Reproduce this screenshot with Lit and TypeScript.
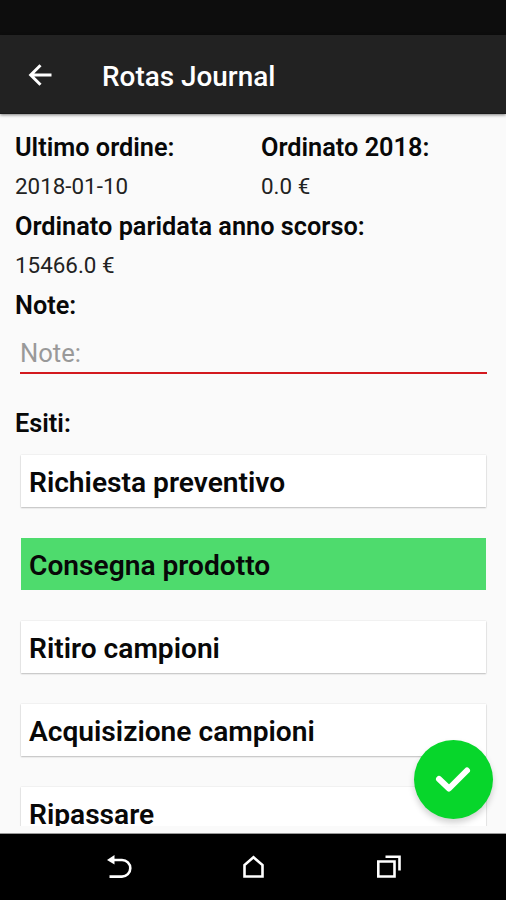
import { LitElement, html, css } from "lit";
import { customElement, property, state } from "lit/decorators.js";
import { classMap } from "lit/directives/class-map.js";

@customElement("outcome-item")
class OutcomeItem extends LitElement {
  @property() label = "";
  @property({ type: Boolean }) selected = false;

  static styles = css`
    :host {
      display: block;
    }
    .card {
      box-sizing: border-box;
      height: 52px;
      padding-left: 8px;
      line-height: 56px;
      font-size: 28.15px;
      font-weight: 600;
      background: #fff;
      color: #080808;
      white-space: nowrap;
      box-shadow: 0 1px 1.5px rgba(0, 0, 0, 0.22), 0 0 1.5px rgba(0, 0, 0, 0.12);
    }
    .card.selected {
      background: #4edb6d;
      box-shadow: none;
    }
  `;

  render() {
    return html`<div class=${classMap({ card: true, selected: this.selected })}>${this.label}</div>`;
  }
}

@customElement("app-root")
class AppRoot extends LitElement {
  @state() private chosen = "Consegna prodotto";

  private outcomes = [
    "Richiesta preventivo",
    "Consegna prodotto",
    "Ritiro campioni",
    "Acquisizione campioni",
    "Ripassare",
  ];

  static styles = css`
    :host {
      display: flex;
      flex-direction: column;
      position: relative;
      height: 900px;
      overflow: hidden;
      background: #fafafa;
      color: #080808;
      font-family: Roboto, sans-serif;
    }
    .status {
      flex: none;
      height: 35px;
      background: #0d0d0d;
    }
    .bar {
      flex: none;
      display: flex;
      align-items: center;
      height: 79px;
      box-sizing: border-box;
      padding: 2px 0 0 28px;
      background: #222;
      border-bottom: 1px solid #1a1a1a;
      box-shadow: 0 1px 3px rgba(0, 0, 0, 0.5);
      z-index: 1;
    }
    .back {
      width: 24px;
      height: 24px;
      flex: none;
      display: block;
    }
    .title {
      margin: 2px 0 0 50px;
      font-size: 27.9px;
      font-weight: 500;
      color: #fff;
      white-space: nowrap;
    }
    .content {
      flex: 1;
      min-height: 0;
      overflow: hidden;
      padding: 14px 15px 0;
      margin-bottom: 8px;
    }
    .pair {
      display: grid;
      grid-template-columns: 246px 1fr;
    }
    .label,
    .value {
      height: 39.4px;
      line-height: 39.4px;
      white-space: nowrap;
    }
    .label {
      font-size: 25.3px;
      font-weight: 600;
    }
    .value {
      font-size: 22.4px;
      font-weight: 400;
      color: #222;
    }
    .field {
      display: flex;
      align-items: center;
      box-sizing: border-box;
      height: 49px;
      margin: 0 4px 0 5px;
      padding-top: 10px;
      border-bottom: 2px solid #d3191e;
      font-size: 25.6px;
      color: #999;
    }
    .outcomes {
      margin-top: 30px;
      line-height: 40.4px;
    }
    .list {
      display: flex;
      flex-direction: column;
      gap: 31px;
      margin: 12px 5px 0 6px;
    }
    .fab {
      position: absolute;
      left: 414px;
      top: 740px;
      width: 79px;
      height: 79px;
      border-radius: 50%;
      background: #07d62b;
      box-shadow: 0 4px 6px rgba(0, 0, 0, 0.18);
    }
    .fab svg {
      display: block;
      width: 79px;
      height: 79px;
    }
    .nav {
      flex: none;
      box-sizing: border-box;
      height: 66px;
      background: #000;
      box-shadow: 0 -1px 0 #999;
    }
    .nav svg {
      display: block;
      width: 506px;
      height: 66px;
    }
  `;

  render() {
    return html`
      <div class="status"></div>
      <header class="bar">
        <svg class="back" viewBox="0 0 24 24" fill="none" stroke="#fff" stroke-width="3">
          <path d="M23.5 12H3M12.5 2.2L2.7 12L12.5 21.8" />
        </svg>
        <div class="title">Rotas Journal</div>
      </header>
      <main class="content">
        <div class="pair">
          <div class="label">Ultimo ordine:</div>
          <div class="label">Ordinato 2018:</div>
          <div class="value">2018-01-10</div>
          <div class="value">0.0 €</div>
        </div>
        <div class="label">Ordinato paridata anno scorso:</div>
        <div class="value">15466.0 €</div>
        <div class="label">Note:</div>
        <div class="field">Note:</div>
        <div class="label outcomes">Esiti:</div>
        <div class="list">
          ${this.outcomes.map(
            (o) => html`<outcome-item
              .label=${o}
              .selected=${o === this.chosen}
              @click=${() => (this.chosen = o)}
            ></outcome-item>`
          )}
        </div>
      </main>
      <footer class="nav">
        <svg viewBox="0 1 506 66" fill="none" stroke="#fff" stroke-width="2.6">
          <path d="M113 27H122A8.3 8.3 0 0 1 122 43.6H109.5" />
          <path d="M107 27L114.5 22V31.5Z" fill="#fff" stroke="none" />
          <path d="M244.5 43.5V32L253.5 24.3L262.5 32V43.5Z" />
          <path d="M378.3 28.5H394.5V43.5H378.3Z" />
          <path d="M385.5 23.8H399.5V37.5" />
        </svg>
      </footer>
      <div class="fab">
        <svg viewBox="0 0 79 79" fill="none" stroke="#fff" stroke-width="6" stroke-linecap="round" stroke-linejoin="round">
          <path d="M25 39L35 48.5L53 30.5" />
        </svg>
      </div>
    `;
  }
}
